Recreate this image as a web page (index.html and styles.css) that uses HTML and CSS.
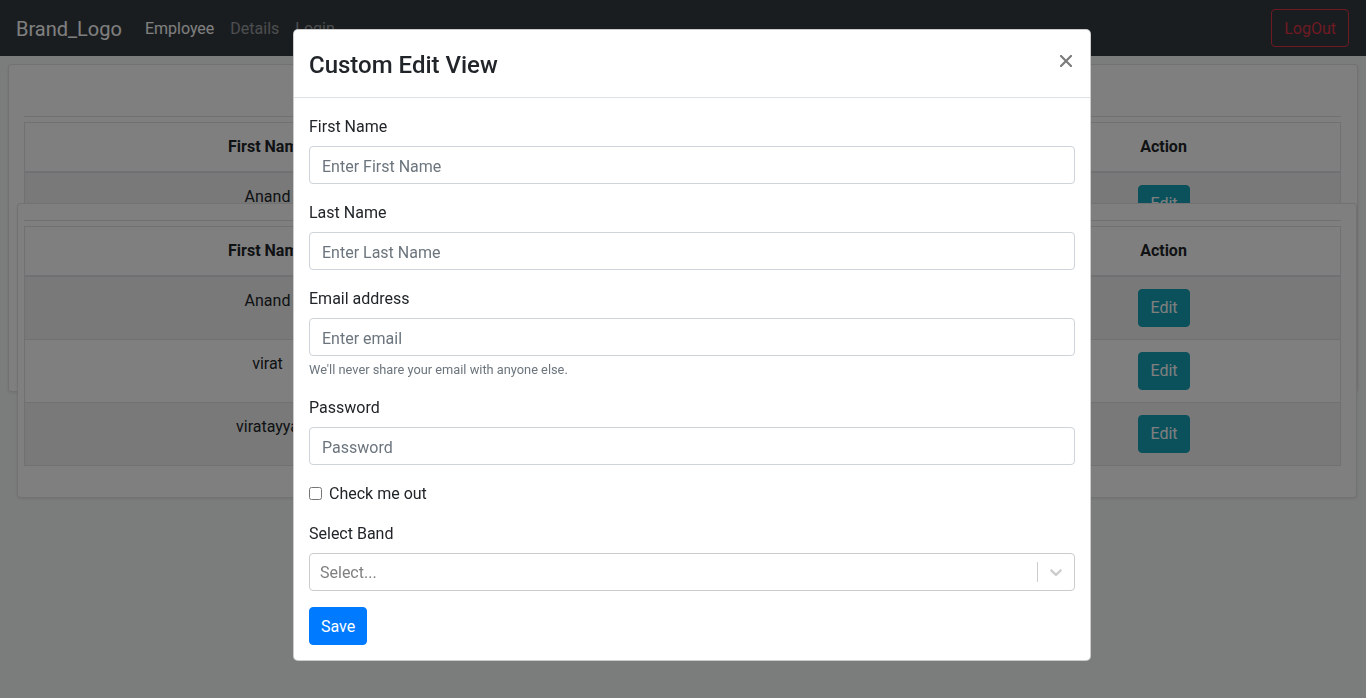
FILE: index.html
```html
<!DOCTYPE html>
<html lang="en">
<head>
<meta charset="utf-8">
<title>Custom Edit View</title>
<link rel="stylesheet" href="styles.css">
</head>
<body>
<nav class="navbar">
  <a class="brand" href="#">Brand_Logo</a>
  <ul class="nav">
    <li><a class="nav-link active" href="#">Employee</a></li>
    <li><a class="nav-link" href="#">Details</a></li>
    <li><a class="nav-link" href="#">Login</a></li>
  </ul>
  <button class="btn-logout" type="button">LogOut</button>
</nav>

<main class="stack">
  <section class="card card-back">
    <div class="clip">
      <div class="rule"></div>
      <table class="table">
        <colgroup><col class="c1"><col><col><col class="c4"></colgroup>
        <thead><tr><th>First Name</th><th>Last Name</th><th>Email</th><th>Action</th></tr></thead>
        <tbody>
          <tr class="odd"><td>Anand</td><td>Kumar</td><td>anand@mail.com</td><td><button class="btn-edit" type="button">Edit</button></td></tr>
        </tbody>
      </table>
    </div>
  </section>
  <section class="card card-front">
    <div class="rule"></div>
    <table class="table">
      <colgroup><col class="c1"><col><col><col class="c4"></colgroup>
      <thead><tr><th>First Name</th><th>Last Name</th><th>Email</th><th>Action</th></tr></thead>
      <tbody>
        <tr class="odd"><td>Anand</td><td>Kumar</td><td>anand@mail.com</td><td><button class="btn-edit" type="button">Edit</button></td></tr>
        <tr><td>virat</td><td>kohli</td><td>virat@mail.com</td><td><button class="btn-edit" type="button">Edit</button></td></tr>
        <tr class="odd"><td>viratayya</td><td>k</td><td>viratayya@mail.com</td><td><button class="btn-edit" type="button">Edit</button></td></tr>
      </tbody>
    </table>
  </section>
</main>

<div class="backdrop"></div>

<div class="modal" role="dialog">
  <div class="modal-header">
    <h5 class="modal-title">Custom Edit View</h5>
    <button class="close" type="button" aria-label="Close">
      <svg width="12" height="12" viewBox="0 0 12 12"><path d="M1 1 L11 11 M11 1 L1 11" stroke="#7b7b7b" stroke-width="2.2" stroke-linecap="square"/></svg>
    </button>
  </div>
  <form class="modal-body">
    <div class="form-group">
      <label class="label">First Name</label>
      <input class="form-control" type="text" placeholder="Enter First Name">
    </div>
    <div class="form-group">
      <label class="label">Last Name</label>
      <input class="form-control" type="text" placeholder="Enter Last Name">
    </div>
    <div class="form-group">
      <label class="label">Email address</label>
      <input class="form-control" type="email" placeholder="Enter email">
      <small class="help">We'll never share your email with anyone else.</small>
    </div>
    <div class="form-group">
      <label class="label">Password</label>
      <input class="form-control" type="password" placeholder="Password">
    </div>
    <div class="form-group form-check">
      <input class="check" type="checkbox" id="chk">
      <label class="check-label" for="chk">Check me out</label>
    </div>
    <div class="form-group">
      <label class="label">Select Band</label>
      <div class="select">
        <div class="select-value"><span class="placeholder">Select...</span></div>
        <div class="select-indicators">
          <span class="select-sep"></span>
          <span class="select-arrow">
            <svg width="20" height="20" viewBox="0 0 20 20"><path d="M4.516 7.548c0.436-0.446 1.043-0.481 1.576 0l3.908 3.747 3.908-3.747c0.533-0.481 1.141-0.446 1.574 0 0.436 0.445 0.408 1.197 0 1.615-0.406 0.418-4.695 4.502-4.695 4.502-0.217 0.223-0.502 0.335-0.787 0.335s-0.57-0.112-0.789-0.335c0 0-4.287-4.084-4.695-4.502s-0.436-1.170 0-1.615z" fill="#cccccc"/></svg>
          </span>
        </div>
      </div>
    </div>
    <button class="btn-save" type="button">Save</button>
  </form>
</div>
</body>
</html>
```

FILE: styles.css
```css
* { box-sizing: border-box; }

html, body {
  margin: 0;
  padding: 0;
}

body {
  font-family: Roboto, "Liberation Sans", Arial, sans-serif;
  font-size: 16px;
  line-height: 1.5;
  color: #212529;
  background: #f7f8f9;
  height: 698px;
  overflow: hidden;
}

/* ---------- navbar ---------- */
.navbar {
  display: flex;
  align-items: center;
  height: 56px;
  padding: 8px 17px 8px 16px;
  background: #343a40;
}

.brand {
  font-size: 20px;
  line-height: 30px;
  padding: 6px 0 4px;
  margin-right: 15px;
  color: #fff;
  text-decoration: none;
}

.nav {
  display: flex;
  list-style: none;
  margin: 0;
  padding: 0;
}

.nav-link {
  display: block;
  padding: 9px 8px 7px;
  color: rgba(255, 255, 255, 0.5);
  text-decoration: none;
}

.nav-link.active { color: #fff; }

.btn-logout {
  margin-left: auto;
  font: inherit;
  line-height: 24px;
  padding: 7px 12px 5px;
  background: transparent;
  color: #dc3545;
  border: 1px solid #dc3545;
  border-radius: 4px;
}

/* ---------- background cards ---------- */
.stack {
  display: grid;
  grid-template-columns: 9px 1340px 1px;
  grid-template-rows: 140px 188px auto;
  margin: 8px 0 0 8px;
}

.card {
  background: #fff;
  border: 1px solid rgba(0, 0, 0, 0.1);
  border-radius: 4px;
  box-shadow: 0 1px 3px rgba(0, 0, 0, 0.08);
}

.card-back {
  grid-column: 1 / 4;
  grid-row: 1 / 3;
  padding: 51px 16px 31px 15px;
}

.clip {
  height: 89px;
  overflow: hidden;
}

.card-front {
  grid-column: 2 / 3;
  grid-row: 2 / 4;
  z-index: 1;
  margin-top: -1px;
  padding: 16px 15px 31px 6px;
}

.rule {
  border-top: 1px solid #dee2e6;
  margin-bottom: 5px;
}

.table {
  width: 1317px;
  border-collapse: collapse;
  table-layout: fixed;
  text-align: center;
}

.table .c1 { width: 486px; }
.table .c4 { width: 354px; }

.table th,
.table td {
  border: 1px solid #dee2e6;
  padding: 12px;
  vertical-align: top;
  line-height: 24px;
  white-space: nowrap;
  overflow: hidden;
}

.table th {
  font-weight: 700;
  border-bottom-width: 2px;
}

.table tr.odd td { background: rgba(0, 0, 0, 0.05); }

.btn-edit {
  font: inherit;
  line-height: 24px;
  padding: 6px 11px;
  margin-left: 1px;
  color: #fff;
  background: #17a2b8;
  border: 1px solid #17a2b8;
  border-radius: 4px;
}

/* ---------- overlay + modal ---------- */
.backdrop {
  position: fixed;
  inset: 0;
  background: rgba(0, 0, 0, 0.5);
  z-index: 10;
}

.modal {
  position: fixed;
  left: 293px;
  top: 29px;
  width: 798px;
  z-index: 20;
  background: #fff;
  border: 1px solid rgba(0, 0, 0, 0.2);
  border-radius: 5px;
}

.modal-header {
  display: flex;
  align-items: flex-start;
  justify-content: space-between;
  padding: 17px 16px 14px 15px;
  border-bottom: 1px solid #dee2e6;
}

.modal-title {
  margin: 0;
  font-size: 24px;
  font-weight: 500;
  line-height: 36px;
}

.close {
  background: none;
  border: 0;
  padding: 0;
  margin: 8px 2px 0 0;
  width: 12px;
  height: 12px;
  display: flex;
}

.modal-body {
  display: block;
  margin: 0;
  padding: 16px 15px 15px 15px;
}

.form-group { margin-bottom: 16px; }

.label {
  display: inline-block;
  padding-top: 1px;
  margin-bottom: 7px;
}

.form-control {
  display: block;
  width: 100%;
  height: 38px;
  padding: 7px 12px 5px;
  font: inherit;
  line-height: 24px;
  color: #495057;
  background: #fff;
  border: 1px solid #ced4da;
  border-radius: 4px;
}

.form-control::placeholder { color: #6c757d; opacity: 1; }

.help {
  display: block;
  margin-top: 4px;
  padding-top: 1px;
  font-size: 12.8px;
  line-height: 18.2px;
  color: #6c757d;
}

.form-check {
  display: flex;
  align-items: center;
  height: 24px;
}

.check {
  width: 13px;
  height: 13px;
  margin: 0 7px 0 0;
}

.check-label { padding-top: 1px; }

.select {
  display: flex;
  min-height: 38px;
  border: 1px solid #cccccc;
  border-radius: 4px;
  background: #fff;
}

.select-value {
  flex: 1;
  display: flex;
  align-items: center;
  padding: 4px 8px 2px;
}

.placeholder {
  margin: 0 2px;
  color: #808080;
}

.select-indicators {
  display: flex;
  align-items: stretch;
}

.select-sep {
  width: 1px;
  margin: 8px 0;
  background: #cccccc;
}

.select-arrow {
  display: flex;
  align-items: center;
  padding: 8px;
}

.btn-save {
  font: inherit;
  line-height: 24px;
  padding: 7px 11px 5px;
  color: #fff;
  background: #007bff;
  border: 1px solid #007bff;
  border-radius: 4px;
}
```
